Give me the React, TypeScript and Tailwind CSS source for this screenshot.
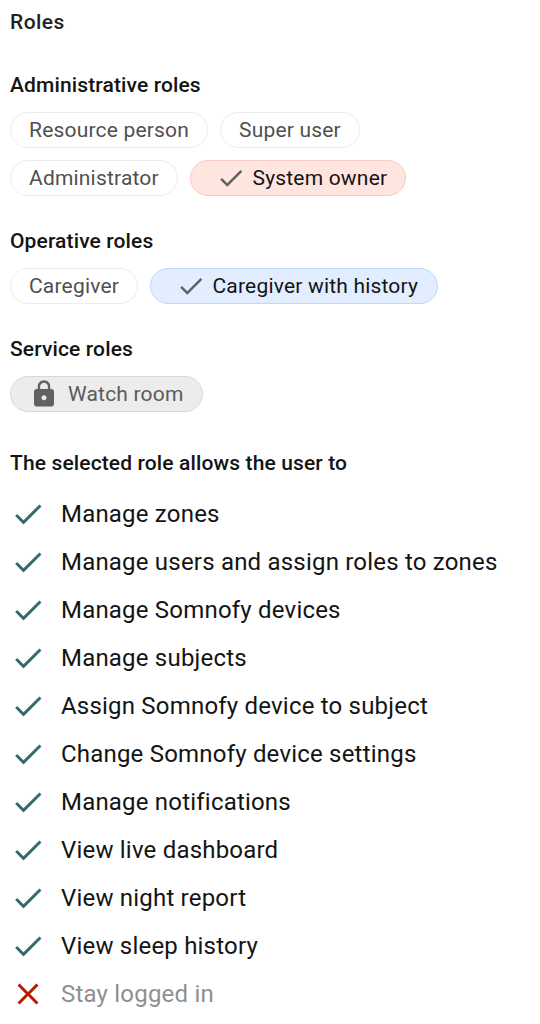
import { clsx } from 'clsx';

const CHECK = 'M9 16.17 4.83 12l-1.42 1.41L9 19 21 7l-1.41-1.41z';
const CLOSE = 'M19 6.41 17.59 5 12 10.59 6.41 5 5 6.41 10.59 12 5 17.59 6.41 19 12 13.41 17.59 19 19 17.59 13.41 12z';
const LOCK = 'M18 8h-1V6c0-2.76-2.24-5-5-5S7 3.24 7 6v2H6c-1.1 0-2 .9-2 2v10c0 1.1.9 2 2 2h12c1.1 0 2-.9 2-2V10c0-1.1-.9-2-2-2zm-6 9c-1.1 0-2-.9-2-2s.9-2 2-2 2 .9 2 2-.9 2-2 2zm3.1-9H8.9V6c0-1.71 1.39-3.1 3.1-3.1s3.1 1.39 3.1 3.1v2z';

const permissions = [
  { label: 'Manage zones', allowed: true },
  { label: 'Manage users and assign roles to zones', allowed: true },
  { label: 'Manage Somnofy devices', allowed: true },
  { label: 'Manage subjects', allowed: true },
  { label: 'Assign Somnofy device to subject', allowed: true },
  { label: 'Change Somnofy device settings', allowed: true },
  { label: 'Manage notifications', allowed: true },
  { label: 'View live dashboard', allowed: true },
  { label: 'View night report', allowed: true },
  { label: 'View sleep history', allowed: true },
  { label: 'Stay logged in', allowed: false },
];

function Icon({ path, className }: { path: string; className: string }) {
  return (
    <svg viewBox="0 0 24 24" fill="currentColor" className={clsx('shrink-0', className)}>
      <path d={path} />
    </svg>
  );
}

const variants = {
  plain: 'bg-white border-[#ececec] text-[#505050]',
  red: 'bg-[#ffe5e0] border-[#fbc9c1] text-[#141414]',
  blue: 'bg-[#e2eeff] border-[#c0d8f7] text-[#141414]',
  locked: 'bg-[#ececec] border-[#d9d9d9] text-[#5a5a5a]',
};

function Chip({ label, variant = 'plain', width }: { label: string; variant?: keyof typeof variants; width: string }) {
  return (
    <button className={clsx('flex h-9 items-center rounded-full border px-[18px] text-[21px] tracking-[0.19px] whitespace-nowrap', variants[variant], width)}>
      {variant === 'locked' && <Icon path={LOCK} className="size-[30px] mr-[9px] text-[#616161]" />}
      {(variant === 'red' || variant === 'blue') && <Icon path={CHECK} className="size-[30px] ml-[7px] mr-[6.5px] text-[#616161]" />}
      <span className="pt-[2px]">{label}</span>
    </button>
  );
}

function Heading({ children }: { children: string }) {
  return <h2 className="h-6 text-[21px] leading-6 font-medium tracking-[0.13px]">{children}</h2>;
}

export default function App() {
  return (
    <div className="h-[1024px] overflow-hidden bg-white px-[10px] pt-[10px] font-['Roboto',sans-serif] text-[#141414]">
      <h1 className="h-6 text-[21px] leading-6 font-medium tracking-[0.45px] text-[#222]">Roles</h1>

      <section className="mt-[39px]">
        <Heading>Administrative roles</Heading>
        <div className="mt-[15px] flex w-[450px] flex-wrap gap-3">
          <Chip label="Resource person" width="w-[198px]" />
          <Chip label="Super user" width="w-[140px]" />
          <Chip label="Administrator" width="w-[168px]" />
          <Chip label="System owner" variant="red" width="w-[216px]" />
        </div>
      </section>

      <section className="mt-[33px]">
        <Heading>Operative roles</Heading>
        <div className="mt-[15px] flex gap-3">
          <Chip label="Caregiver" width="w-[128px]" />
          <Chip label="Caregiver with history" variant="blue" width="w-[288px]" />
        </div>
      </section>

      <section className="mt-[33px]">
        <Heading>Service roles</Heading>
        <div className="mt-[15px] flex gap-3">
          <Chip label="Watch room" variant="locked" width="w-[193px]" />
        </div>
      </section>

      <section className="mt-[39px]">
        <Heading>The selected role allows the user to</Heading>
        <ul className="mt-[15px]">
          {permissions.map((p) => (
            <li key={p.label} className="flex h-12 items-center gap-[15px] text-[24px] tracking-[0.2px]">
              <Icon path={p.allowed ? CHECK : CLOSE} className={clsx('size-9', p.allowed ? 'text-[#316d72]' : 'text-[#b71c00]')} />
              <span className={clsx('whitespace-nowrap', !p.allowed && 'text-[#8f8f8f]')}>{p.label}</span>
            </li>
          ))}
        </ul>
      </section>
    </div>
  );
}
